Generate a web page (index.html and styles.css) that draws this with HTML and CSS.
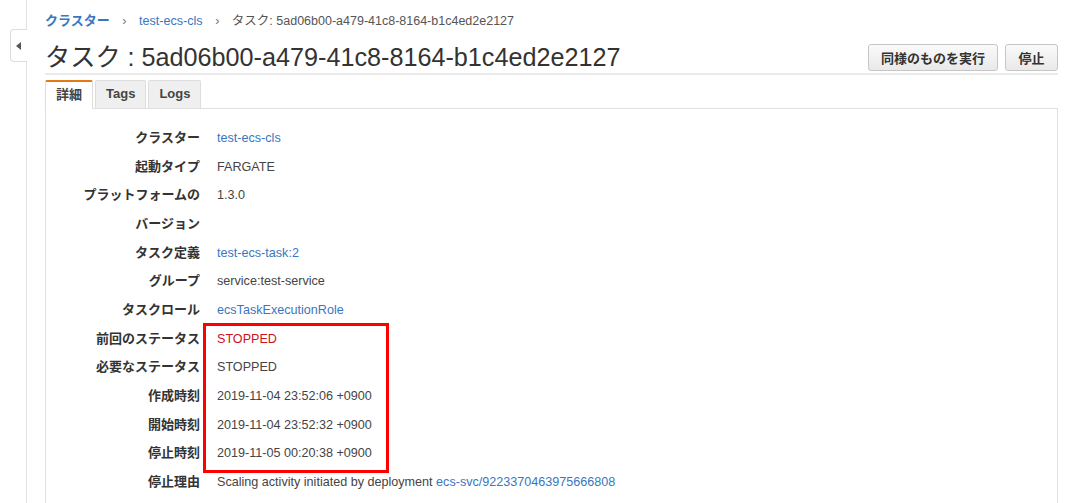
FILE: index.html
```html
<!DOCTYPE html>
<html lang="ja">
<head>
    <meta charset="UTF-8">
    <title>タスク : 5ad06b00-a479-41c8-8164-b1c4ed2e2127</title>
    <link rel="stylesheet" href="styles.css">
</head>
<body>
    <div class="sidebar">
        <div class="toggle"><span class="arrow"></span></div>
    </div>
    <div class="main">
        <div class="crumbs">
            <a class="crumb-root" href="#">クラスター</a>
            <span class="sep">›</span>
            <a href="#">test-ecs-cls</a>
            <span class="sep">›</span>
            <span class="current">タスク: 5ad06b00-a479-41c8-8164-b1c4ed2e2127</span>
        </div>

        <div class="header">
            <h1>タスク : 5ad06b00-a479-41c8-8164-b1c4ed2e2127</h1>
            <div class="actions">
                <button class="btn">同様のものを実行</button>
                <button class="btn btn-small">停止</button>
            </div>
        </div>

        <div class="tabs">
            <div class="tab active">詳細</div>
            <div class="tab">Tags</div>
            <div class="tab">Logs</div>
        </div>

        <div class="panel">
            <dl class="details">
                <dt>クラスター</dt><dd><a href="#">test-ecs-cls</a></dd>
                <dt>起動タイプ</dt><dd>FARGATE</dd>
                <dt>プラットフォームのバージョン</dt><dd>1.3.0</dd>
                <dt>タスク定義</dt><dd><a href="#">test-ecs-task:2</a></dd>
                <dt>グループ</dt><dd>service:test-service</dd>
                <dt>タスクロール</dt><dd><a href="#">ecsTaskExecutionRole</a></dd>
                <dt>前回のステータス</dt><dd class="stopped">STOPPED</dd>
                <dt>必要なステータス</dt><dd>STOPPED</dd>
                <dt>作成時刻</dt><dd>2019-11-04 23:52:06 +0900</dd>
                <dt>開始時刻</dt><dd>2019-11-04 23:52:32 +0900</dd>
                <dt>停止時刻</dt><dd>2019-11-05 00:20:38 +0900</dd>
                <dt>停止理由</dt><dd>Scaling activity initiated by deployment <a href="#">ecs-svc/9223370463975666808</a></dd>
            </dl>
            <div class="highlight"></div>
        </div>
    </div>
</body>
</html>
```

FILE: styles.css
```css
body {
    margin: 0;
    display: flex;
    min-height: 503px;
    font-family: "Liberation Sans", Arial, "Noto Sans CJK JP", sans-serif;
    font-size: 13px;
    color: #444;
    background-color: #fff;
}
a {
    color: #3a76c0;
    text-decoration: none;
}

.sidebar {
    width: 27px;
    flex-shrink: 0;
    border-right: 1px solid #e3e3e3;
    padding-top: 29px;
    box-sizing: border-box;
}
.toggle {
    width: 17px;
    height: 33px;
    margin-left: 10px;
    border: 1px solid #dcdcdc;
    border-right: none;
    border-radius: 4px 0 0 4px;
    background-color: #fff;
    box-sizing: border-box;
    display: flex;
    align-items: center;
    justify-content: center;
}
.arrow {
    width: 0;
    height: 0;
    border-top: 4px solid transparent;
    border-bottom: 4px solid transparent;
    border-right: 5px solid #555;
    margin-left: -1px;
}

.main {
    flex: 1;
    padding: 12px 12px 0 18px;
}

.crumbs {
    line-height: 18px;
    font-size: 12.6px;
}
.crumb-root {
    font-weight: bold;
    font-size: 13px;
}
.sep {
    color: #777;
    margin: 0 9px;
}
.current {
    color: #555;
    font-size: 12.5px;
}

.header {
    display: flex;
    justify-content: space-between;
    align-items: flex-start;
    border-bottom: 2px solid #eaeaea;
    margin-top: 11px;
}
h1 {
    margin: 0;
    font-size: 25.2px;
    font-weight: normal;
    color: #333;
    line-height: 32px;
}
.actions {
    display: flex;
    gap: 7px;
    padding-top: 3px;
}
.btn {
    font-family: inherit;
    font-size: 13px;
    font-weight: bold;
    color: #333;
    height: 27px;
    padding: 0 12px;
    border: 1px solid #c6c6c6;
    border-radius: 3px;
    background: linear-gradient(#fafafa, #e9e9e9);
}
.btn-small {
    min-width: 53px;
    padding: 0 10px;
}

.tabs {
    display: flex;
    gap: 2px;
    margin-top: 5px;
    margin-bottom: -1px;
}
.tab {
    height: 28px;
    line-height: 26px;
    padding: 0 10px;
    font-weight: bold;
    color: #444;
    background-color: #efefef;
    border: 1px solid #ddd;
    border-bottom: none;
    border-radius: 2px 2px 0 0;
    box-sizing: border-box;
}
.tab.active {
    background-color: #fff;
    border-top: 2px solid #e47911;
    line-height: 25px;
    height: 29px;
    position: relative;
    z-index: 1;
}

.panel {
    position: relative;
    border: 1px solid #e0e0e0;
    border-bottom: none;
    padding: 15px 0 20px 0;
}
.details {
    display: grid;
    grid-template-columns: 120px 1fr;
    column-gap: 17px;
    margin: 0 0 0 34px;
    line-height: 28.67px;
}
.details dt {
    font-weight: bold;
    color: #333;
    text-align: right;
}
.details dd {
    margin: 0;
    font-size: 12.6px;
}
.details .stopped {
    color: #d0101b;
}

.highlight {
    position: absolute;
    left: 157px;
    top: 214px;
    width: 186px;
    height: 150px;
    border: 3px solid #f00;
    box-sizing: border-box;
}
```
